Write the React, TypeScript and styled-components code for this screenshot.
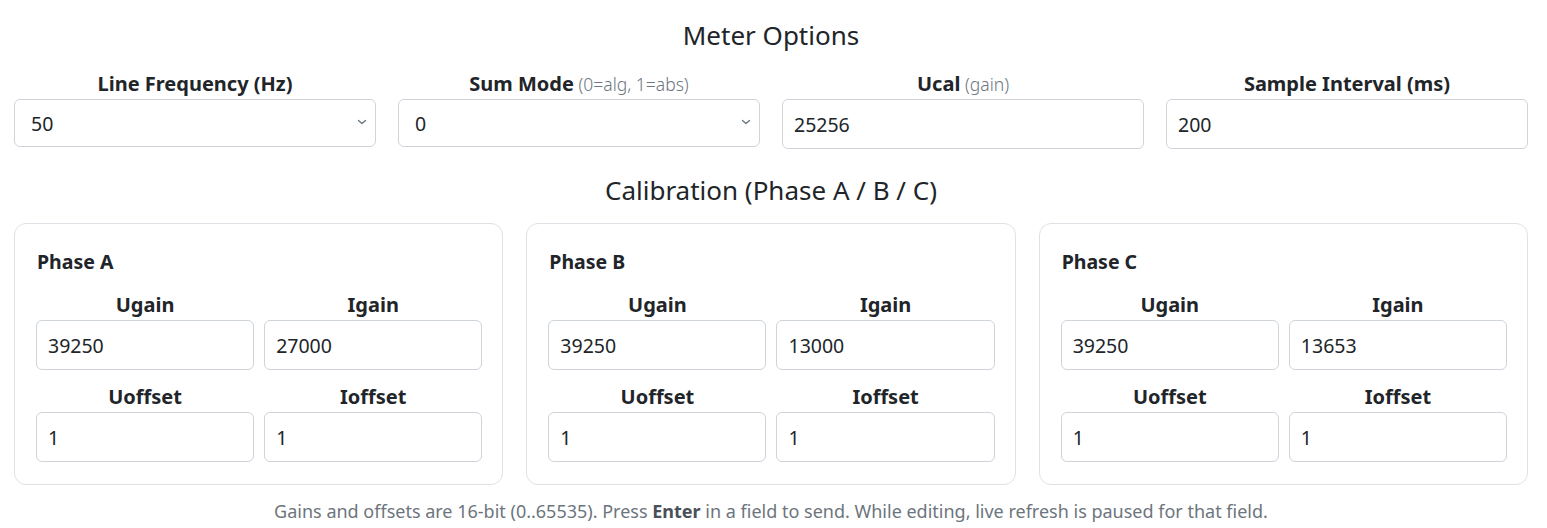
import React from "react";
import styled, { createGlobalStyle } from "styled-components";

const Global = createGlobalStyle`
  html, body { margin: 0; padding: 0; background: #fff; }
  body { font-family: "Noto Sans", "Open Sans", sans-serif; color: #212529; }
  * { box-sizing: border-box; }
`;

const Page = styled.div`
  padding: 19px 19px 0 14px;
`;

const Heading = styled.h2`
  margin: 0;
  font-family: "Noto Sans", sans-serif;
  font-weight: 400;
  font-size: 26px;
  line-height: 32px;
  text-align: center;
  color: #212529;
`;

const OptionsGrid = styled.div`
  display: grid;
  grid-template-columns: repeat(4, 1fr);
  gap: 22px;
  margin-top: 21px;
`;

const Field = styled.div`
  display: flex;
  flex-direction: column;
`;

const Label = styled.label`
  display: block;
  text-align: center;
  font-weight: 700;
  font-size: 20px;
  line-height: 24px;
  margin-bottom: 3px;
  color: #212529;
  white-space: nowrap;
`;

const Hint = styled.span`
  font-weight: 300;
  font-size: 17.5px;
  color: #6c757d;
`;

const controlBase = `
  width: 100%;
  font-family: "Noto Sans", sans-serif;
  font-size: 19.5px;
  color: #212529;
  background: #fff;
  border: 1px solid #ced4da;
  border-radius: 6px;
  outline: none;
`;

const Input = styled.input`
  ${controlBase}
  height: 50px;
  padding: 0 11px;
`;

const SelectWrap = styled.div`
  position: relative;
`;

const Select = styled.select`
  ${controlBase}
  height: 48px;
  padding: 0 16px;
  appearance: none;
  -webkit-appearance: none;
`;

const Chevron = styled.svg`
  position: absolute;
  right: 9px;
  top: 19px;
  pointer-events: none;
`;

const SubHeading = styled(Heading)`
  margin-top: 25px;
`;

const CardsRow = styled.div`
  display: grid;
  grid-template-columns: repeat(3, 1fr);
  gap: 23px;
  margin-top: 17px;
`;

const Card = styled.div`
  border: 1px solid #dee2e6;
  border-radius: 12px;
  padding: 26px 20px 22px 21px;
  height: 262px;
`;

const CardTitle = styled.div`
  font-weight: 700;
  font-size: 19.5px;
  line-height: 24px;
  padding-left: 1px;
`;

const PairGrid = styled.div<{ $top: number }>`
  display: grid;
  grid-template-columns: 1fr 1fr;
  column-gap: 10px;
  margin-top: ${(p) => p.$top}px;
`;

const Footer = styled.p`
  margin: 14px 0 0;
  text-align: center;
  font-size: 18px;
  line-height: 24px;
  color: #6c757d;
`;

const Strong = styled.b`
  font-weight: 700;
  color: #495057;
`;

function SelectField({ label, hint, value, options }: { label: string; hint?: string; value: string; options: string[] }) {
  return (
    <Field>
      <Label>
        {label}
        {hint && <Hint> {hint}</Hint>}
      </Label>
      <SelectWrap>
        <Select defaultValue={value}>
          {options.map((o) => (
            <option key={o} value={o}>
              {o}
            </option>
          ))}
        </Select>
        <Chevron width="10" height="8" viewBox="0 0 10 8">
          <path d="M1.5 2.5 L5 5.5 L8.5 2.5" fill="none" stroke="#6c757d" strokeWidth="1.3" strokeLinecap="round" strokeLinejoin="round" />
        </Chevron>
      </SelectWrap>
    </Field>
  );
}

function InputField({ label, hint, value }: { label: string; hint?: string; value: string }) {
  return (
    <Field>
      <Label>
        {label}
        {hint && <Hint> {hint}</Hint>}
      </Label>
      <Input defaultValue={value} />
    </Field>
  );
}

const phases = [
  { name: "Phase A", ugain: "39250", igain: "27000", uoff: "1", ioff: "1" },
  { name: "Phase B", ugain: "39250", igain: "13000", uoff: "1", ioff: "1" },
  { name: "Phase C", ugain: "39250", igain: "13653", uoff: "1", ioff: "1" },
];

export default function App() {
  return (
    <>
      <Global />
      <Page>
        <Heading>Meter Options</Heading>
        <OptionsGrid>
          <SelectField label="Line Frequency (Hz)" value="50" options={["50", "60"]} />
          <SelectField label="Sum Mode" hint="(0=alg, 1=abs)" value="0" options={["0", "1"]} />
          <InputField label="Ucal" hint="(gain)" value="25256" />
          <InputField label="Sample Interval (ms)" value="200" />
        </OptionsGrid>
        <SubHeading>Calibration (Phase A / B / C)</SubHeading>
        <CardsRow>
          {phases.map((p) => (
            <Card key={p.name}>
              <CardTitle>{p.name}</CardTitle>
              <PairGrid $top={19}>
                <InputField label="Ugain" value={p.ugain} />
                <InputField label="Igain" value={p.igain} />
              </PairGrid>
              <PairGrid $top={15}>
                <InputField label="Uoffset" value={p.uoff} />
                <InputField label="Ioffset" value={p.ioff} />
              </PairGrid>
            </Card>
          ))}
        </CardsRow>
        <Footer>
          Gains and offsets are 16-bit (0..65535). Press <Strong>Enter</Strong> in a field to send. While editing, live refresh is paused for that field.
        </Footer>
      </Page>
    </>
  );
}
